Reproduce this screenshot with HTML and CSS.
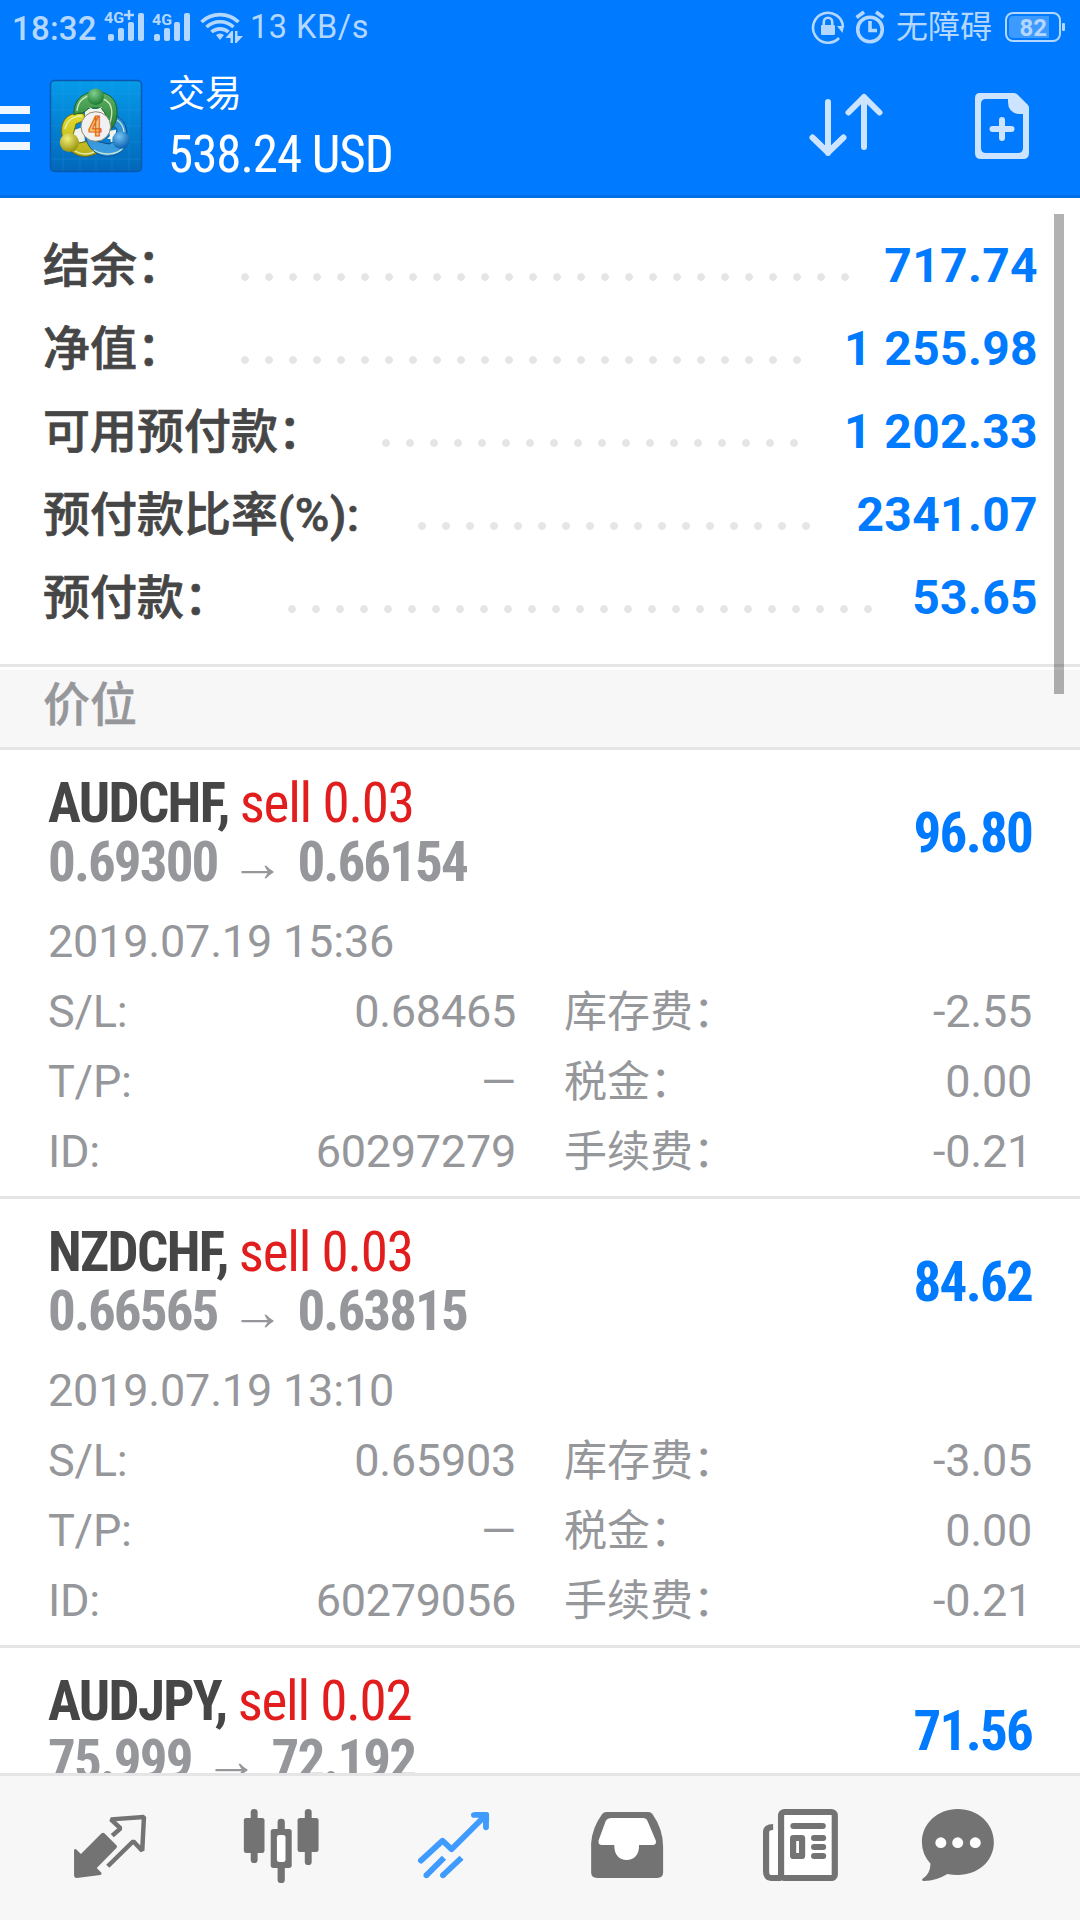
FILE: index.html
```html
<!DOCTYPE html>
<html lang="zh-CN">
<head>
<meta charset="utf-8">
<title>交易</title>
<link rel="stylesheet" href="styles.css">
</head>
<body>
<div class="screen">
  <div class="status">
    <span class="clock">18:32</span>
    <svg class="signals" width="140" height="36" viewBox="0 0 140 36">
      <g fill="#b3d7ff">
        <text class="net" x="0" y="16" textLength="20" lengthAdjust="spacingAndGlyphs">4G</text>
        <path d="M20 8h10M25 3v10" stroke="#b3d7ff" stroke-width="2.500"/>
        <rect x="4" y="27" width="6" height="7" rx="2"/><rect x="14" y="21" width="6" height="13" rx="2"/><rect x="24" y="15" width="6" height="19" rx="2"/><rect x="34" y="6" width="6" height="28" rx="2"/>
        <text class="net" x="48" y="18" textLength="20" lengthAdjust="spacingAndGlyphs">4G</text>
        <rect x="50" y="27" width="6" height="7" rx="2"/><rect x="60" y="21" width="6" height="13" rx="2"/><rect x="70" y="15" width="6" height="19" rx="2"/><rect x="80" y="6" width="6" height="28" rx="2"/>
        <path d="M112 28q4-3 8 0l-4 5z"/>
        <path d="M121.500 31l6-7h1.500v12h-2.500v-5zM131 24h2.500v5h5.500l-6.500 7H131z"/>
      </g>
      <g fill="none" stroke="#b3d7ff" stroke-width="3.600">
        <path d="M97.500 15a27 27 0 0 1 37 0"/><path d="M102.500 20a20 20 0 0 1 27 0"/><path d="M107.500 25a13 13 0 0 1 17 0"/>
      </g>
    </svg>
    <span class="speed">13 KB/s</span>
    <div class="status-right">
      <svg width="34" height="34" viewBox="0 0 34 34" fill="none" stroke="#b3d7ff" stroke-width="2.600">
        <path d="M28 28a15 15 0 1 1 4-11"/><path d="M26 16l7 0-1.500 7z" fill="#b3d7ff" stroke="none"/>
        <rect x="10" y="15" width="14" height="10" rx="1" fill="#b3d7ff" stroke="none"/><path d="M12.800 16v-4a4.200 4.200 0 0 1 8.400 0v4"/>
      </svg>
      <svg width="30" height="34" viewBox="0 0 30 34" fill="none" stroke="#b3d7ff" stroke-width="3.600">
        <circle cx="15" cy="19.500" r="12.300"/><path d="M15 11v9.500h7M1.500 7.500L9 2M28.500 7.500L21 2"/>
      </svg>
      <span class="mode">无障碍</span>
      <div class="battery"><span class="level">82</span></div>
    </div>
  </div>

  <div class="appbar">
    <div class="menu"><i></i><i></i><i></i></div>
    <svg class="logo" width="94" height="94" viewBox="0 0 94 94">
      <defs>
        <linearGradient id="sky" x1="0" y1="0" x2="0" y2="1"><stop offset="0" stop-color="#069bea"/><stop offset="1" stop-color="#0267ba"/></linearGradient>
        <linearGradient id="gr" x1="0" y1="0" x2="0" y2="1"><stop offset="0" stop-color="#5fb267"/><stop offset="1" stop-color="#1f7a2d"/></linearGradient>
        <linearGradient id="ye" x1="0" y1="0" x2="0" y2="1"><stop offset="0" stop-color="#e2dd2c"/><stop offset="1" stop-color="#b5ae1a"/></linearGradient>
        <linearGradient id="bl" x1="0" y1="0" x2="0" y2="1"><stop offset="0" stop-color="#2c8ed6"/><stop offset="1" stop-color="#3d9fe0"/></linearGradient>
        <radialGradient id="gb" cx=".4" cy=".3" r=".7"><stop offset="0" stop-color="#7fd08c"/><stop offset="1" stop-color="#1c7a33"/></radialGradient>
        <radialGradient id="yb" cx=".4" cy=".3" r=".7"><stop offset="0" stop-color="#f2f07a"/><stop offset="1" stop-color="#99930f"/></radialGradient>
        <radialGradient id="bb" cx=".4" cy=".3" r=".7"><stop offset="0" stop-color="#76c6f5"/><stop offset="1" stop-color="#0a62b0"/></radialGradient>
      </defs>
      <rect x="1.500" y="1.500" width="91" height="91" rx="4" fill="url(#sky)" stroke="#0a58ad" stroke-width="1.500"/>
      <path d="M14 2v90M31 2v90M47 2v90M63 2v90M80 2v90M2 15h90M2 31h90M2 47h90M2 63h90M2 80h90" stroke="#3bb0ee" stroke-width="1" opacity=".18"/>
      <path d="M36 30h22v8H36zM22 52l12-4 2 14-10 4zM60 52l10-2 2 8-10 6z" fill="#eef3ea"/>
      <g stroke-width="1" stroke-linejoin="round">
        <path d="M35 35C18 31 9 44 14 60L22 72C30 79 40 79 50 73L40 62 30 64 24 56 27 45 36 41z" fill="url(#ye)" stroke="#6f6a12"/>
        <path d="M64 36C76 39 80 50 77 66 72 77 56 81 46 73 40 69 37 62 37 58L46 62 60 65 66 62 68 50 62 45z" fill="url(#bl)" stroke="#0b4f92"/>
        <path d="M25 36C24 21 34 13 46 13 62 13 69 22 68 36 67 45 63 51 57 54L56 34 52 29H40L34 34C28 34 25 36 25 36z" fill="url(#gr)" stroke="#185f25"/>
      </g>
      <path d="M28 32C29 22 34 19 39 17M16 50C18 41 25 37 33 37M26 72C33 76 39 76 45 73M45 71C54 77 68 76 74 69M54 20C65 24 64 36 60 46M68 41C74 45 75 49 75 54" fill="none" stroke="#eaf7d0" stroke-width="1.400" opacity=".8"/>
      <path d="M24 55l8-2-2 9zM58 60l8-8v8zM40 28l6 3 7-3-3 6h-7z" fill="#f4f6ee"/>
      <circle cx="46.700" cy="17.700" r="8.300" fill="url(#gb)"/>
      <circle cx="20.300" cy="63.500" r="9.500" fill="url(#yb)"/>
      <circle cx="72" cy="61" r="8.700" fill="url(#bb)"/>
      <circle cx="46.800" cy="47.500" r="14.800" fill="#f1f0f2" stroke="#8d8a72" stroke-width="1"/>
      <text x="46" y="57" class="four" text-anchor="middle">4</text>
    </svg>
    <div class="heading">
      <span class="title">交易</span>
      <span class="equity"><span class="cond">538.24 USD</span></span>
    </div>
    <svg class="sort" width="76" height="66" viewBox="0 0 76 66" fill="none" stroke="#cce4ff" stroke-width="6" stroke-linecap="round" stroke-linejoin="round">
      <path d="M20 10v51M4.500 45.500L20 60.500 35.500 45.500M56 55V5M40.500 20.500L56 5 71.500 20.500"/>
    </svg>
    <svg class="neworder" width="56" height="68" viewBox="0 0 56 68">
      <path fill="#cce4ff" fill-rule="evenodd" d="M6 1H40Q42 1 43.500 2.500L54 13Q55 14.500 55 16V61Q55 67 49 67H7Q1 67 1 61V6Q1 1 6 1zM12 7Q7 7 7 12V56Q7 61 12 61H44Q49 61 49 56V22H44Q34 20 34 10V7z"/>
      <path d="M28 28v18M18.500 37h19" stroke="#cce4ff" stroke-width="6" stroke-linecap="round"/>
    </svg>
  </div>

  <div class="content">
    <div class="summary">
      <div class="sum"><span class="label">结余：</span><i class="dots" style="width:624px"></i><b>717.74</b></div>
      <div class="sum"><span class="label">净值：</span><i class="dots" style="width:576px"></i><b>1 255.98</b></div>
      <div class="sum"><span class="label">可用预付款：</span><i class="dots" style="width:432px"></i><b>1 202.33</b></div>
      <div class="sum"><span class="label">预付款比率<span class="pct">(%):</span></span><i class="dots" style="width:408px"></i><b>2341.07</b></div>
      <div class="sum"><span class="label">预付款：</span><i class="dots" style="width:600px"></i><b>53.65</b></div>
    </div>
    <div class="section">价位</div>

    <div class="position">
      <div class="top">
        <div>
          <div class="line cond"><b>AUDCHF,</b> <span class="sell">sell 0.03</span></div>
          <div class="line cond price">0.69300<span class="arrow">→</span>0.66154</div>
        </div>
        <div class="profit cond">96.80</div>
      </div>
      <div class="date">2019.07.19 15:36</div>
      <div class="details">
        <span>S/L:</span><span class="num">0.68465</span><span class="cjk">库存费：</span><span class="num">-2.55</span>
        <span>T/P:</span><span class="num">—</span><span class="cjk">税金：</span><span class="num">0.00</span>
        <span>ID:</span><span class="num">60297279</span><span class="cjk">手续费：</span><span class="num">-0.21</span>
      </div>
    </div>

    <div class="position">
      <div class="top">
        <div>
          <div class="line cond"><b>NZDCHF,</b> <span class="sell">sell 0.03</span></div>
          <div class="line cond price">0.66565<span class="arrow">→</span>0.63815</div>
        </div>
        <div class="profit cond">84.62</div>
      </div>
      <div class="date">2019.07.19 13:10</div>
      <div class="details">
        <span>S/L:</span><span class="num">0.65903</span><span class="cjk">库存费：</span><span class="num">-3.05</span>
        <span>T/P:</span><span class="num">—</span><span class="cjk">税金：</span><span class="num">0.00</span>
        <span>ID:</span><span class="num">60279056</span><span class="cjk">手续费：</span><span class="num">-0.21</span>
      </div>
    </div>

    <div class="position">
      <div class="top">
        <div>
          <div class="line cond"><b>AUDJPY,</b> <span class="sell">sell 0.02</span></div>
          <div class="line cond price">75.999<span class="arrow">→</span>72.192</div>
        </div>
        <div class="profit cond">71.56</div>
      </div>
    </div>
    <div class="scrollbar"></div>
  </div>

  <div class="tabs">
    <svg viewBox="180 480 278.800 288" preserveAspectRatio="none">
      <path fill="#737373" d="M295 580Q299 577 303 580L338 616Q342 620 338 624L281 684 295 699Q296 704 291 705L223 714Q215 714 215 705V630Q217 625 221 628L235 642z"/>
      <path fill="none" stroke="#737373" stroke-width="13" stroke-linejoin="bevel" d="M326 587L350 565 322 538 418 531 413 632 387 604 313 679"/>
    </svg>
    <svg viewBox="680.400 480 278.800 288" preserveAspectRatio="none" fill="#737373">
      <rect x="709" y="534" width="60" height="105" rx="7"/><rect x="729" y="507" width="20" height="162" rx="10"/>
      <rect x="865" y="534" width="61" height="102" rx="7"/><rect x="886" y="507" width="20" height="168" rx="10"/>
      <rect x="807" y="536" width="21" height="193" rx="10"/><rect x="787" y="567" width="61" height="117" rx="8"/><rect x="805" y="585" width="25" height="81" rx="7" fill="#fff"/>
    </svg>
    <svg viewBox="1178.700 480 278.800 288" preserveAspectRatio="none" fill="none" stroke="#409bff" stroke-width="17">
      <path stroke-linecap="round" stroke-linejoin="round" d="M1222 662L1285 602 1311 628 1405 531M1376 525H1411V562"/>
      <path fill="#409bff" stroke="none" d="M1376 516H1412Q1420 516 1420 524V545L1390 533z"/>
      <path d="M1238 706L1289 653M1286 706L1340 653"/>
      <g fill="#409bff" stroke="none"><circle cx="1238" cy="706" r="8.500"/><circle cx="1286" cy="706" r="8.500"/></g>
    </svg>
    <svg viewBox="112.700 480 278.800 288" preserveAspectRatio="none">
      <path fill="#737373" d="M192 516H314Q321 516 326 522Q357 568 357 620V697Q357 714 340 714H165Q148 714 148 697V610Q150 565 180 522Q185 516 192 516z"/>
      <path fill="#fff" d="M208 534H298Q308 534 312 544L336 602Q338 615 326 615H287C288 646 272 660 251 660S215 646 215 615H180Q166 615 170 600L190 544Q195 534 208 534z"/>
    </svg>
    <svg viewBox="612.700 480 278.800 288" preserveAspectRatio="none" fill="none" stroke="#737373" stroke-width="18">
      <rect x="700" y="516" width="156" height="198" rx="10" fill="#fff"/>
      <path fill="#fff" stroke="none" d="M665 570h26v135h-26z"/>
      <path d="M677 561Q656 561 656.500 578V694Q656 714 673 714H700"/>
      <g stroke-linecap="round"><path d="M736 558H821M796 594H822M796 621H822M796 648H822"/></g>
      <rect x="735" y="594" width="26" height="54" rx="1"/>
    </svg>
    <svg viewBox="1112.200 480 278.800 288" preserveAspectRatio="none">
      <path fill="#737373" d="M1213 507C1272 507 1318 550 1318 607S1272 705 1213 705Q1197 705 1183 702Q1152 722 1115 723Q1106 722 1111 716Q1133 702 1134 671Q1109 643 1109 607C1109 550 1155 507 1213 507z"/>
      <g fill="#fff"><circle cx="1164" cy="608" r="16"/><circle cx="1213" cy="608" r="16"/><circle cx="1264" cy="608" r="16"/></g>
    </svg>
  </div>
</div>
</body>
</html>
```
FILE: styles.css
```css
* { box-sizing: border-box; }
body { margin: 0; font-family: Roboto, "Noto Sans CJK SC", sans-serif; }
.screen { width: 1080px; height: 1920px; display: flex; flex-direction: column; background: #fff; overflow: hidden; }

.status { height: 56px; flex: none; display: flex; align-items: flex-start; background: #007aff; color: #b3d7ff; padding: 7px 15px 0 12px; }
.clock { font-size: 33px; font-weight: 500; line-height: 44px; width: 92px; letter-spacing: .2px; }
.signals { flex: none; }
.net { font: 700 15px Roboto, sans-serif; }
.speed { font-size: 32.500px; line-height: 40px; margin-left: 6px; white-space: nowrap; letter-spacing: .5px; }
.status-right { margin-left: auto; display: flex; align-items: flex-start; padding-top: 3px; }
.status-right svg { margin-right: 10px; }
.mode { font-size: 32px; line-height: 34px; margin-left: 1px; margin-right: 13px; }
.battery { width: 56px; height: 30px; margin: 2px 4px 0 0; border: 2px solid #b3d7ff; border-radius: 8px; padding: 2px; position: relative; }
.battery::after { content: ""; position: absolute; right: -6px; top: 9px; width: 3px; height: 8px; border-radius: 1px; background: #b3d7ff; }
.level { display: block; width: 40px; height: 22px; border-radius: 4px 0 0 4px; background: #3d9aff; font-size: 24px; font-weight: 700; line-height: 24px; text-align: right; padding-right: 2px; }

.appbar { height: 142px; flex: none; display: flex; align-items: flex-start; background: #007aff; border-bottom: 3px solid #006fe6; color: #fff; padding-right: 50px; }
.menu { width: 30px; padding-top: 50px; display: flex; flex-direction: column; gap: 10px; }
.menu i { height: 8px; background: #f0f7ff; }
.logo { margin: 23px 0 0 19px; flex: none; }
.four { font: 700 27px Roboto, sans-serif; font-stretch: 75%; fill: #f7c873; stroke: #e2661a; stroke-width: 1.200px; }
.heading { margin-left: 25px; width: 260px; display: flex; flex-direction: column; }
.title { font-size: 37px; line-height: 50px; padding-top: 14px; }
.equity { font-size: 51px; line-height: 60px; margin-top: 5px; white-space: nowrap; letter-spacing: -1.05px; }
.sort { margin: 36px 0 0 380px; flex: none; }
.neworder { margin: 36px 0 0 auto; flex: none; }

.cond { font-family: "Roboto Condensed", Roboto, sans-serif; font-stretch: 75%; }

.content { flex: 1; min-height: 0; overflow: hidden; position: relative; }
.scrollbar { position: absolute; right: 16px; top: 16px; width: 10px; height: 480px; background: rgba(0, 0, 0, .3); }

.summary { height: 469px; padding: 26px 42px 0 43px; border-bottom: 3px solid #e5e5e5; }
.sum { height: 83px; display: flex; align-items: center; }
.label { font-size: 47px; font-weight: 500; line-height: 83px; color: #464646; white-space: nowrap; -webkit-text-stroke: .7px #464646; }
.pct { display: inline-block; width: 83px; letter-spacing: .5px; }
.dots { height: 8px; margin: 22px 0 0 57px; background: radial-gradient(circle at 4px 4px, #e5e5e5 3.500px, transparent 4.200px) 0 0 / 24px 8px repeat-x; }
.sum b { margin-left: auto; font-size: 48px; line-height: 83px; color: #007aff; letter-spacing: .35px; }

.section { height: 83px; margin-top: 0; border-top: 3px solid #fff; border-bottom: 3px solid #e5e5e5; background: #f7f7f7; padding-left: 43px; font-size: 47px; font-weight: 500; line-height: 70px; color: #96979b; -webkit-text-stroke: .4px #96979b; }

.position { height: 449px; padding: 24px 48px 0; border-bottom: 3px solid #e5e5e5; color: #96979b; }
.top { display: flex; justify-content: space-between; align-items: center; }
.line { font-size: 55px; line-height: 59px; height: 59px; white-space: nowrap; color: #464646; letter-spacing: -1.65px; }
.sell { color: #e21d1d; letter-spacing: -1.2px; }
.line.price { font-weight: 700; color: #96979b; letter-spacing: -1.9px; }
.arrow { display: inline-block; width: 80px; text-align: center; letter-spacing: 0; font-family: "Liberation Serif", serif; font-size: 54px; line-height: 40px; }
.profit { font-size: 55px; line-height: 59px; font-weight: 700; color: #007aff; letter-spacing: -1.75px; }
.date { margin-top: 15px; font-size: 45px; line-height: 70px; letter-spacing: -.2px; }
.details { display: grid; grid-template-columns: 117px 351px 226px 1fr; grid-auto-rows: 70px; font-size: 45px; line-height: 70px; white-space: nowrap; letter-spacing: -.25px; }
.num { text-align: right; }
.num + .cjk { padding-left: 48px; }
.cjk { font-size: 43px; letter-spacing: 0; }

.tabs { height: 147px; flex: none; border-top: 3px solid #e5e5e5; background: #f7f7f7; display: flex; justify-content: space-between; align-items: center; padding: 0 61px 0 62px; }
.tabs svg { width: 96px; height: 96px; overflow: visible; }
```
